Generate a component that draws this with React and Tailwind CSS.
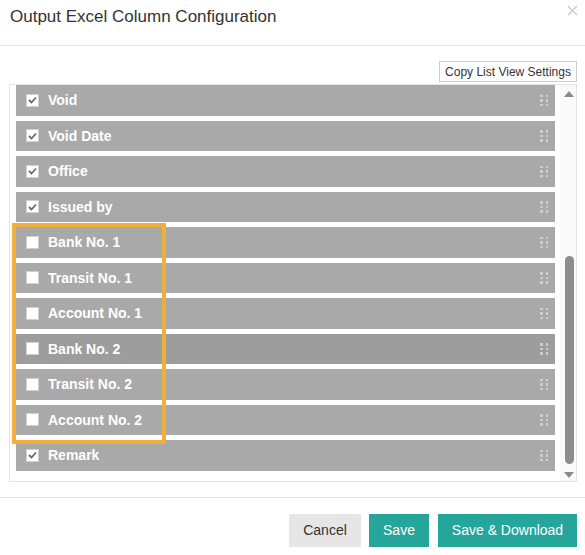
import { useState } from 'react';

const columns = [
  { label: 'Void', checked: true },
  { label: 'Void Date', checked: true },
  { label: 'Office', checked: true },
  { label: 'Issued by', checked: true },
  { label: 'Bank No. 1', checked: false },
  { label: 'Transit No. 1', checked: false },
  { label: 'Account No. 1', checked: false },
  { label: 'Bank No. 2', checked: false },
  { label: 'Transit No. 2', checked: false },
  { label: 'Account No. 2', checked: false },
  { label: 'Remark', checked: true },
];

function DragHandle() {
  return (
    <div className="grid grid-cols-2 gap-x-[3px] gap-y-[2px]">
      {[0, 1, 2, 3, 4, 5].map((i) => (
        <span key={i} className="block w-[2.5px] h-[2.5px] bg-[#cdcdcd]" />
      ))}
    </div>
  );
}

function ColumnRow({ item, hovered, onToggle }) {
  return (
    <div
      className={`flex items-center h-[30.5px] pl-[10px] pr-[7px] ${hovered ? 'bg-[#9d9d9d]' : 'bg-[#a9a9a9]'}`}
    >
      <button
        onClick={onToggle}
        className="w-[13px] h-[13px] bg-white border border-[#d0d0d0] flex items-center justify-center"
      >
        {item.checked && (
          <svg width="9" height="8" viewBox="0 0 9 8">
            <polyline points="1,4 3.5,6.5 8,1.5" fill="none" stroke="#6a6a6a" strokeWidth="1.8" />
          </svg>
        )}
      </button>
      <span className="ml-[9px] text-[14px] font-bold text-white leading-none">{item.label}</span>
      <div className="ml-auto">
        <DragHandle />
      </div>
    </div>
  );
}

export default function App() {
  const [items, setItems] = useState(columns);

  const toggle = (idx) => {
    setItems(items.map((it, i) => (i === idx ? { ...it, checked: !it.checked } : it)));
  };

  return (
    <div className="w-[585px] h-[555px] bg-white text-[#333] font-['Liberation_Sans',Arial,sans-serif] overflow-hidden">
      {/* Header */}
      <div className="h-[46px] border-b border-[#e5e5e5] flex items-start justify-between pl-[10px] pr-[7px]">
        <h2 className="pt-[7px] text-[17px] leading-[20px] font-normal text-[#333]">
          Output Excel Column Configuration
        </h2>
        <button className="mt-[5px]">
          <svg width="11" height="11" viewBox="0 0 11 11">
            <path d="M1 1 L10 10 M10 1 L1 10" stroke="#c8c8c8" strokeWidth="1.3" />
          </svg>
        </button>
      </div>

      {/* Body */}
      <div className="pt-[15px] pl-[9px] pr-[8px]">
        <div className="flex justify-end">
          <button className="h-[21px] w-[138px] border border-[#cccccc] bg-white text-[12px] text-[#333] leading-none">
            Copy List View Settings
          </button>
        </div>

        <div className="relative mt-[2px] h-[398px] border border-[#e3e3e3] flex overflow-hidden">
          <div className="flex-1 pl-[6px] flex flex-col gap-[5px]">
            {items.map((item, idx) => (
              <ColumnRow key={item.label} item={item} hovered={idx === 7} onToggle={() => toggle(idx)} />
            ))}
          </div>

          {/* Scrollbar */}
          <div className="w-[16px] ml-[5px] bg-[#fafafa] flex flex-col items-center">
            <svg className="mt-[6px] ml-[2px]" width="10" height="6" viewBox="0 0 10 6">
              <polygon points="5,0 10,6 0,6" fill="#8a8a8a" />
            </svg>
            <div className="flex-1 w-full flex flex-col items-center">
              <div className="mt-[159px] ml-[2px] w-[9px] h-[208px] rounded-full bg-[#8d8d8d]" />
            </div>
            <svg className="mb-[3px] ml-[2px]" width="10" height="6" viewBox="0 0 10 6">
              <polygon points="0,0 10,0 5,6" fill="#8a8a8a" />
            </svg>
          </div>

          {/* Highlight of the bank columns */}
          <div className="absolute left-[2px] top-[138px] w-[154px] h-[221px] border-4 border-[#f1ae3a] pointer-events-none" />
        </div>
      </div>

      {/* Footer */}
      <div className="mt-[15px] border-t border-[#e5e5e5] pt-[16px] pr-[8px] flex justify-end gap-[8px]">
        <button className="h-[33px] w-[72px] bg-[#e6e6e6] text-[14px] text-[#333]">Cancel</button>
        <button className="h-[33px] w-[60px] bg-[#26a69a] text-[14px] text-white">Save</button>
        <button className="h-[33px] w-[139px] ml-[1px] bg-[#26a69a] text-[14px] text-white">Save &amp; Download</button>
      </div>
    </div>
  );
}
